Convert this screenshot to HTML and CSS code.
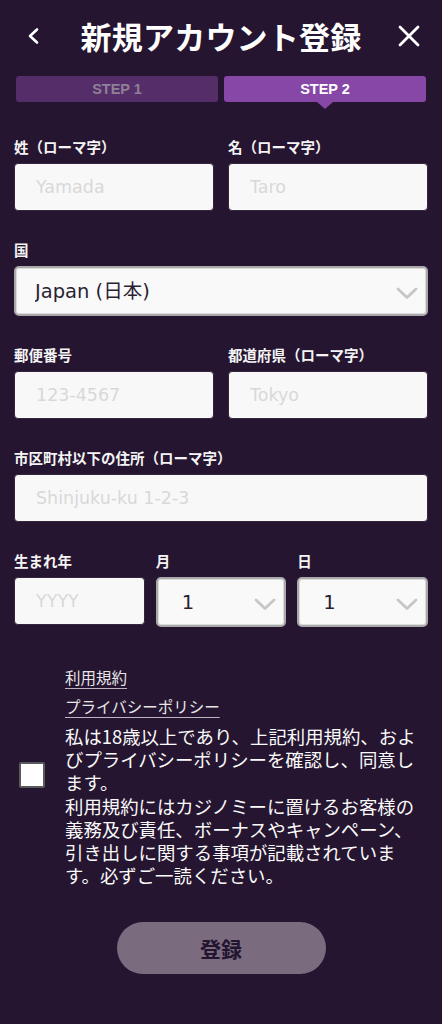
FILE: index.html
```html
<!DOCTYPE html>
<html lang="ja">
<head>
<meta charset="utf-8">
<title>新規アカウント登録</title>
<link rel="stylesheet" href="styles.css">
</head>
<body>
<div class="page">
  <header class="header">
    <button class="icon-btn" aria-label="戻る">
      <svg width="24" height="24" viewBox="0 0 24 24"><path d="M16 5.5 L9 12 L16 18.5" fill="none" stroke="#fff" stroke-width="2.6" stroke-linecap="round" stroke-linejoin="round"/></svg>
    </button>
    <h1 class="title">新規アカウント登録</h1>
    <button class="icon-btn" aria-label="閉じる">
      <svg width="24" height="24" viewBox="0 0 24 24"><path d="M3 3 L21 21 M21 3 L3 21" fill="none" stroke="#fff" stroke-width="2.8" stroke-linecap="round"/></svg>
    </button>
  </header>

  <div class="steps">
    <div class="step">STEP 1</div>
    <div class="step step-active">STEP 2</div>
  </div>

  <form class="form">
    <div class="row row-2">
      <div class="field">
        <label class="label">姓（ローマ字）</label>
        <input class="input" type="text" placeholder="Yamada">
      </div>
      <div class="field">
        <label class="label">名（ローマ字）</label>
        <input class="input" type="text" placeholder="Taro">
      </div>
    </div>

    <div class="field">
      <label class="label">国</label>
      <div class="select-wrap">
        <select class="select"><option>Japan (日本)</option></select>
        <svg class="chev" width="22" height="13" viewBox="0 0 22 13"><path d="M2 2 L11 10.5 L20 2" fill="none" stroke="#c6c6c6" stroke-width="2.8" stroke-linecap="round" stroke-linejoin="round"/></svg>
      </div>
    </div>

    <div class="row row-2">
      <div class="field">
        <label class="label">郵便番号</label>
        <input class="input" type="text" placeholder="123-4567">
      </div>
      <div class="field">
        <label class="label">都道府県（ローマ字）</label>
        <input class="input" type="text" placeholder="Tokyo">
      </div>
    </div>

    <div class="field">
      <label class="label">市区町村以下の住所（ローマ字）</label>
      <input class="input" type="text" placeholder="Shinjuku-ku 1-2-3">
    </div>

    <div class="row row-3">
      <div class="field">
        <label class="label">生まれ年</label>
        <input class="input" type="text" placeholder="YYYY">
      </div>
      <div class="field">
        <label class="label">月</label>
        <div class="select-wrap">
          <select class="select select-sm"><option>1</option></select>
          <svg class="chev" width="22" height="13" viewBox="0 0 22 13"><path d="M2 2 L11 10.5 L20 2" fill="none" stroke="#c6c6c6" stroke-width="2.8" stroke-linecap="round" stroke-linejoin="round"/></svg>
        </div>
      </div>
      <div class="field">
        <label class="label">日</label>
        <div class="select-wrap">
          <select class="select select-sm"><option>1</option></select>
          <svg class="chev" width="22" height="13" viewBox="0 0 22 13"><path d="M2 2 L11 10.5 L20 2" fill="none" stroke="#c6c6c6" stroke-width="2.8" stroke-linecap="round" stroke-linejoin="round"/></svg>
        </div>
      </div>
    </div>

    <div class="agree">
      <div class="agree-box"><span class="checkbox"></span></div>
      <div class="agree-body">
        <a class="link" href="#">利用規約</a>
        <a class="link" href="#">プライバシーポリシー</a>
        <p class="agree-text">私は18歳以上であり、上記利用規約、およびプライバシーポリシーを確認し、同意します。<br>利用規約にはカジノミーに置けるお客様の義務及び責任、ボーナスやキャンペーン、引き出しに関する事項が記載されています。必ずご一読ください。</p>
      </div>
    </div>

    <div class="submit-row">
      <button class="submit" type="button">登録</button>
    </div>
  </form>
</div>
</body>
</html>
```

FILE: styles.css
```css
* { box-sizing: border-box; }

html, body {
  margin: 0;
  padding: 0;
  background: #251530;
}

body {
  font-family: "Noto Sans CJK JP", "Noto Sans", sans-serif;
  color: #f2f2f2;
}

.page {
  width: 442px;
  min-height: 1024px;
  background: #251530;
}

.header {
  height: 72px;
  display: flex;
  align-items: center;
  justify-content: space-between;
  padding: 0 21px 0 21px;
}

.icon-btn {
  width: 24px;
  height: 24px;
  padding: 0;
  border: 0;
  background: none;
  display: flex;
}

.title {
  margin: 0;
  font-size: 31px;
  font-weight: 700;
  color: #fff;
  letter-spacing: 0.2px;
  line-height: 40px;
}

.steps {
  margin: 4px 16px 0 16px;
  display: grid;
  grid-template-columns: 1fr 1fr;
  gap: 6px;
}

.step {
  position: relative;
  height: 26px;
  border-radius: 3px;
  background: #552d69;
  color: #8e8198;
  font-family: "Liberation Sans", Arial, sans-serif;
  font-weight: 700;
  font-size: 14.5px;
  line-height: 26px;
  text-align: center;
}

.step-active {
  background: #8747a6;
  color: #fff;
}

.step-active::after {
  content: "";
  position: absolute;
  left: 50%;
  top: 26px;
  margin-left: -8px;
  border-left: 8px solid transparent;
  border-right: 8px solid transparent;
  border-top: 7px solid #8747a6;
}

.form {
  padding: 35px 14px 0 14px;
}

.row {
  display: grid;
}

.row-2 {
  grid-template-columns: 1fr 1fr;
  gap: 14px;
}

.row-3 {
  grid-template-columns: 1fr 1fr 1fr;
  gap: 11px;
}

.field {
  display: flex;
  flex-direction: column;
  margin-bottom: 29px;
}

.label {
  font-size: 14.5px;
  font-weight: 700;
  line-height: 20px;
  height: 20px;
  margin-bottom: 6px;
  color: #f4f4f4;
  white-space: nowrap;
}

.input {
  width: 100%;
  height: 48px;
  border: 1px solid #33253b;
  border-radius: 4px;
  background: #f8f8f8;
  padding: 0 0 0 21px;
  font-family: "DejaVu Sans", "Noto Sans CJK JP", sans-serif;
  font-size: 17.5px;
  color: #2b1f33;
  outline: none;
}

.input::placeholder {
  color: #d8d8d8;
}

.select-wrap {
  position: relative;
}

.select {
  -webkit-appearance: none;
  appearance: none;
  width: 100%;
  height: 50px;
  border: 2px solid #a9a9a9;
  border-radius: 5px;
  background: #f9f9f9;
  padding: 0 0 0 19px;
  font-family: "DejaVu Sans", "Noto Sans CJK JP", sans-serif;
  font-size: 19.5px;
  color: #2b1f33;
  outline: none;
  box-shadow: inset 0 0 0 1px #dcdcdc;
}

.select-sm {
  padding-left: 24px;
}

.chev {
  position: absolute;
  right: 10px;
  top: 21px;
  pointer-events: none;
}

.agree {
  display: flex;
  align-items: center;
  margin-top: 7px;
}

.agree-box {
  width: 51px;
  flex: 0 0 51px;
  padding-left: 5px;
}

.checkbox {
  display: block;
  width: 26px;
  height: 26px;
  background: #fff;
  border: 2.5px solid #5a5a5a;
  border-radius: 2px;
}

.agree-body {
  width: 360px;
  display: flex;
  flex-direction: column;
  align-items: flex-start;
}

.link {
  font-size: 15.5px;
  line-height: 29px;
  color: #e6e6e6;
  text-decoration: underline;
  text-underline-offset: 4px;
  text-decoration-color: #bdb4c2;
}

.agree-text {
  margin: 4px 0 0 0;
  font-family: "Noto Sans CJK JP", sans-serif;
  font-size: 18.4px;
  line-height: 23.2px;
  color: #fafafa;
}

.submit-row {
  display: flex;
  justify-content: center;
  margin-top: 35px;
}

.submit {
  width: 209px;
  height: 52px;
  border: 0;
  border-radius: 26px;
  background: #7a6b7e;
  color: #231530;
  font-family: "Noto Sans CJK JP", "Noto Sans", sans-serif;
  font-size: 21px;
  font-weight: 700;
}
```
